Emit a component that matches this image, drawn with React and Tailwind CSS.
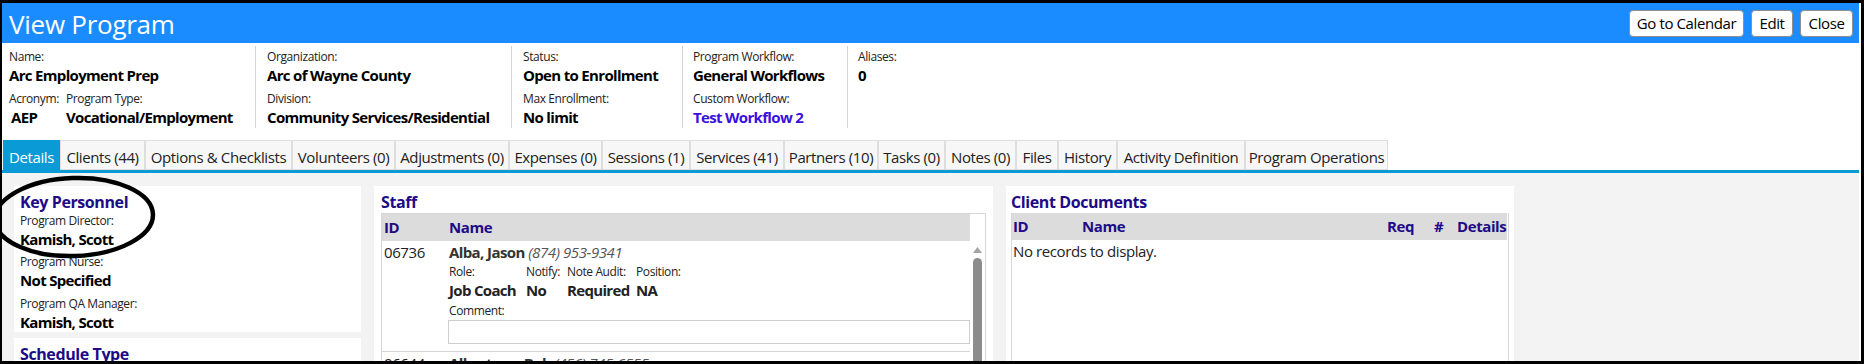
import React from 'react';

// --- DATA ---
const TABS = [
  ['Details', 'w-[57px]'],
  ['Clients (44)', 'w-[85px]'],
  ['Options & Checklists', 'w-[147px]'],
  ['Volunteers (0)', 'w-[103px]'],
  ['Adjustments (0)', 'w-[114px]'],
  ['Expenses (0)', 'w-[93px]'],
  ['Sessions (1)', 'w-[88px]'],
  ['Services (41)', 'w-[94px]'],
  ['Partners (10)', 'w-[94px]'],
  ['Tasks (0)', 'w-[67px]'],
  ['Notes (0)', 'w-[71px]'],
  ['Files', 'w-[42px]'],
  ['History', 'w-[59px]'],
  ['Activity Definition', 'w-[128px]'],
  ['Program Operations', 'w-[143px]'],
];

const NAVY = 'text-[#1d0b87]';

function Label({ children, className = '' }) {
  return <div className={`text-[12px] leading-[16px] text-[#222] whitespace-nowrap ${className}`}>{children}</div>;
}

function Value({ children, className = '', color = 'text-black' }) {
  return <div className={`text-[15px] leading-[20px] font-bold tracking-[-0.045em] whitespace-nowrap ${color} ${className}`}>{children}</div>;
}

function InfoCol({ className, children }) {
  return <div className={`mt-[3px] h-[82px] pt-[3px] ${className}`}>{children}</div>;
}

function Heading({ children }) {
  return <div className={`text-[16px] leading-[20px] font-bold ${NAVY}`}>{children}</div>;
}

export default function App() {
  return (
    <div className="w-[1864px] h-[364px] bg-black pt-[3px] pl-[2px] pr-[3px] pb-[3px] font-['Open_Sans',sans-serif] tracking-[-0.025em] relative overflow-hidden">
      <div className="h-full bg-white pr-[2px] flex flex-col overflow-hidden">
        {/* Header */}
        <div className="h-[40px] shrink-0 bg-[#1a8cff] flex items-center justify-between pl-[7px] pr-[6px]">
          <h1 className="text-[26px] leading-[30px] text-white tracking-[-0.01em] pt-[1px]">View Program</h1>
          <div className="flex gap-[7px] items-center">
            <button className="h-[27px] w-[115px] bg-white border border-[#8f8f8f] rounded-[4px] text-[15px] text-black">Go to Calendar</button>
            <button className="h-[27px] w-[42px] bg-white border border-[#8f8f8f] rounded-[4px] text-[15px] text-black">Edit</button>
            <button className="h-[27px] w-[53px] bg-white border border-[#8f8f8f] rounded-[4px] text-[15px] text-black">Close</button>
          </div>
        </div>

        {/* Info */}
        <div className="h-[97px] shrink-0 flex">
          <InfoCol className="w-[254px] pl-[7px] border-r border-[#d4d4d4]">
            <Label>Name:</Label>
            <Value>Arc Employment Prep</Value>
            <div className="flex mt-[6px]">
              <div className="w-[57px]">
                <Label>Acronym:</Label>
                <Value className="pl-[2px]">AEP</Value>
              </div>
              <div>
                <Label>Program Type:</Label>
                <Value>Vocational/Employment</Value>
              </div>
            </div>
          </InfoCol>
          <InfoCol className="w-[256px] pl-[11px] border-r border-[#d4d4d4]">
            <Label>Organization:</Label>
            <Value>Arc of Wayne County</Value>
            <Label className="mt-[6px]">Division:</Label>
            <Value>Community Services/Residential</Value>
          </InfoCol>
          <InfoCol className="w-[171px] pl-[11px] border-r border-[#d4d4d4]">
            <Label>Status:</Label>
            <Value>Open to Enrollment</Value>
            <Label className="mt-[6px]">Max Enrollment:</Label>
            <Value>No limit</Value>
          </InfoCol>
          <InfoCol className="w-[165px] pl-[10px] border-r border-[#d4d4d4]">
            <Label>Program Workflow:</Label>
            <Value>General Workflows</Value>
            <Label className="mt-[6px]">Custom Workflow:</Label>
            <Value color="text-[#3a10e0]">Test Workflow 2</Value>
          </InfoCol>
          <InfoCol className="pl-[10px]">
            <Label>Aliases:</Label>
            <Value>0</Value>
          </InfoCol>
        </div>

        {/* Tabs */}
        <div className="h-[33px] shrink-0 flex pl-[1px] border-b-[3px] border-[#0a9ad6]">
          {TABS.map(([name, w], i) => (
            <div
              key={name}
              className={`${w} h-[30px] flex items-center justify-center pt-[4px] text-[15px] whitespace-nowrap border ${
                i === 0 ? 'bg-[#0a9ad6] border-[#0a9ad6] text-white' : 'bg-[#f7f7f7] border-[#dedede] text-[#222]'
              }`}
            >
              {name}
            </div>
          ))}
        </div>

        {/* Content */}
        <div className="flex-1 bg-[#f3f3f3] flex gap-[13px] pl-[12px] pt-[13px] overflow-hidden">
          {/* Left column */}
          <div className="w-[347px] flex flex-col gap-[6px]">
            <div className="h-[151px] bg-white pl-[6px] pt-[6px]">
              <Heading>Key Personnel</Heading>
              <Label className="mt-[1px]">Program Director:</Label>
              <Value>Kamish, Scott</Value>
              <Label className="mt-[5px]">Program Nurse:</Label>
              <Value>Not Specified</Value>
              <Label className="mt-[6px]">Program QA Manager:</Label>
              <Value>Kamish, Scott</Value>
            </div>
            <div className="h-[60px] bg-white pl-[6px] pt-[6px]">
              <Heading>Schedule Type</Heading>
            </div>
          </div>

          {/* Staff */}
          <div className="w-[619px] bg-white pl-[7px] pr-[7px] pt-[6px]">
            <Heading>Staff</Heading>
            <div className="mt-[1px] border-x border-t border-[#d6d6d6] h-[200px]">
              <div className="flex h-[27px]">
                <div className={`flex-1 bg-[#dcdcdc] flex items-center text-[15px] font-bold ${NAVY}`}>
                  <div className="w-[67px] pl-[2px]">ID</div>
                  <div>Name</div>
                </div>
                <div className="w-[15px] bg-white" />
              </div>
              <div className="flex">
                <div className="flex-1">
                  {/* row 1 */}
                  <div className="flex border-b border-[#d6d6d6] h-[111px] pt-[1px]">
                    <div className="w-[67px] pl-[2px] text-[15px] leading-[20px] text-[#222]">06736</div>
                    <div className="flex-1">
                      <div className="text-[15px] leading-[20px] whitespace-nowrap">
                        <span className="font-bold text-[#333] tracking-[-0.04em]">Alba, Jason</span>{' '}
                        <span className="italic text-[#555]">(874) 953-9341</span>
                      </div>
                      <div className="flex mt-[2px]">
                        <div className="w-[77px]"><Label>Role:</Label><Value color="text-[#222]">Job Coach</Value></div>
                        <div className="w-[41px]"><Label>Notify:</Label><Value color="text-[#222]">No</Value></div>
                        <div className="w-[69px]"><Label>Note Audit:</Label><Value color="text-[#222]">Required</Value></div>
                        <div><Label>Position:</Label><Value color="text-[#222]">NA</Value></div>
                      </div>
                      <Label className="mt-[3px]">Comment:</Label>
                      <div className="h-[24px] border border-[#cfcfcf] ml-[-1px] mt-[1px]" />
                    </div>
                  </div>
                  {/* row 2 */}
                  <div className="flex pt-[1px]">
                    <div className="w-[67px] pl-[2px] text-[15px] leading-[20px] text-[#222]">06644</div>
                    <div className="text-[15px] leading-[20px] whitespace-nowrap">
                      <span className="font-bold text-[#333] tracking-[-0.04em]">Albertson, Bob</span>{' '}
                      <span className="italic text-[#555]">(456) 745-6555</span>
                    </div>
                  </div>
                </div>
                {/* scrollbar */}
                <div className="w-[15px] flex flex-col items-center pt-[6px]">
                  <svg width="9" height="6" viewBox="0 0 9 6"><path d="M4.5 0 L9 6 L0 6 Z" fill="#a3a3a3" /></svg>
                  <div className="mt-[5px] w-[9px] h-[120px] rounded-full bg-[#8c8c8c]" />
                </div>
              </div>
            </div>
          </div>

          {/* Client Documents */}
          <div className="w-[508px] bg-white pl-[5px] pr-[5px] pt-[6px]">
            <Heading>Client Documents</Heading>
            <div className="mt-[1px] border-x border-[#d6d6d6] h-[200px]">
              <div className={`h-[27px] bg-[#dcdcdc] flex items-center text-[15px] font-bold ${NAVY} mr-[1px]`}>
                <div className="w-[70px] pl-[1px]">ID</div>
                <div className="flex-1">Name</div>
                <div className="w-[47px]">Req</div>
                <div className="w-[23px]">#</div>
                <div className="w-[50px]">Details</div>
              </div>
              <div className="pl-[1px] pt-[1px] text-[15px] leading-[20px] text-[#222]">No records to display.</div>
            </div>
          </div>
        </div>
      </div>

      {/* annotation */}
      <svg className="absolute left-0 top-0 pointer-events-none" width="200" height="300" viewBox="0 0 200 300">
        <ellipse cx="74" cy="217" rx="79" ry="39" fill="none" stroke="#000" strokeWidth="4.5" transform="rotate(-2 74 217)" />
      </svg>
    </div>
  );
}
